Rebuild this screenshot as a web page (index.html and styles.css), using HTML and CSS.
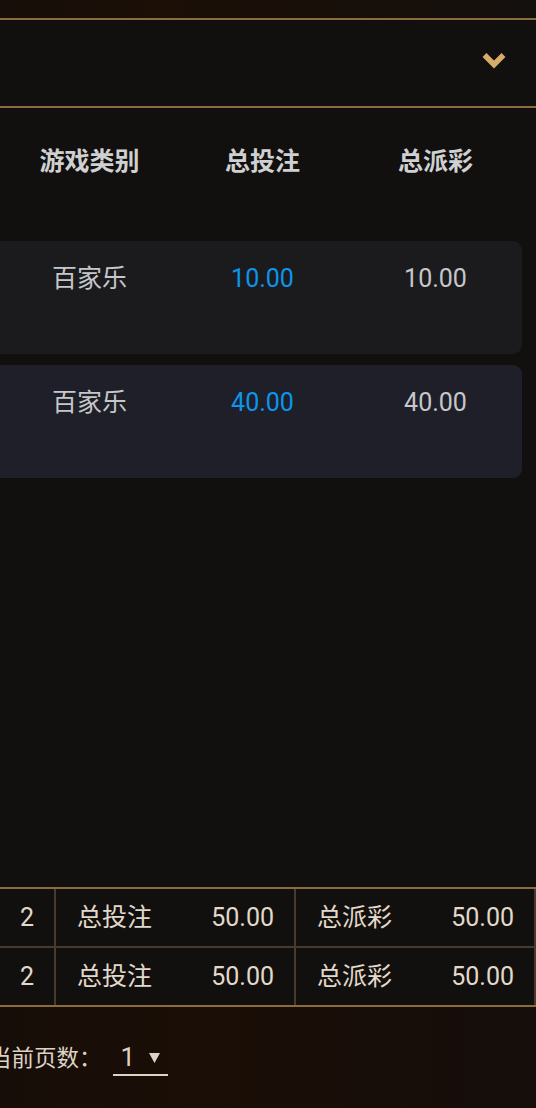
FILE: index.html
```html
<!DOCTYPE html>
<html lang="zh-CN">
<head>
<meta charset="utf-8">
<title>游戏报表</title>
<link rel="stylesheet" href="styles.css">
</head>
<body>
<div class="page">
  <div class="topbar"></div>
  <div class="filter">
    <svg class="chev" width="24" height="17" viewBox="0 0 24 17"><polyline points="2.5,3 12,12.5 21.5,3" fill="none" stroke="#d6ab6c" stroke-width="5.5"/></svg>
  </div>
  <div class="content">
    <div class="thead">
      <div class="col">游戏类别</div>
      <div class="col">总投注</div>
      <div class="col">总派彩</div>
    </div>
    <div class="list">
      <div class="card card-a">
        <div class="col">百家乐</div>
        <div class="col blue">10.00</div>
        <div class="col">10.00</div>
      </div>
      <div class="card card-b">
        <div class="col">百家乐</div>
        <div class="col blue">40.00</div>
        <div class="col">40.00</div>
      </div>
    </div>
  </div>
  <div class="summary">
    <div class="srow">
      <div class="cell num">2</div>
      <div class="cell pair"><span>总投注</span><span>50.00</span></div>
      <div class="cell pair last"><span>总派彩</span><span>50.00</span></div>
    </div>
    <div class="srow">
      <div class="cell num">2</div>
      <div class="cell pair"><span>总投注</span><span>50.00</span></div>
      <div class="cell pair last"><span>总派彩</span><span>50.00</span></div>
    </div>
  </div>
  <div class="pager">
    <span class="plabel">当前页数：</span>
    <div class="select"><span class="pval">1</span><svg class="tri" width="11" height="11" viewBox="0 0 11 11"><polygon points="0,1 11,1 5.5,11" fill="#ddd3c4"/></svg></div>
  </div>
</div>
</body>
</html>
```

FILE: styles.css
```css
html, body {
  margin: 0;
  padding: 0;
  background: #12100e;
}
body {
  width: 536px;
  height: 1108px;
  overflow: hidden;
  font-family: Roboto, "Noto Sans CJK SC", sans-serif;
}
.page {
  width: 536px;
  display: flex;
  flex-direction: column;
}
.topbar {
  height: 18px;
  background: linear-gradient(90deg, #170e09 0%, #1b0f06 30%, #180f09 60%, #14100d 100%);
}
.filter {
  height: 86px;
  border-top: 2px solid #8a6c3f;
  border-bottom: 2px solid #8a6c3f;
  background: #12100e;
  display: flex;
  justify-content: flex-end;
  align-items: flex-start;
  padding-right: 30px;
}
.chev {
  margin-top: 32px;
  display: block;
}
.content {
  height: 779px;
  display: flex;
  flex-direction: column;
}
.thead {
  height: 102px;
  padding-bottom: 4px;
  display: flex;
  justify-content: flex-end;
  align-items: center;
  padding-right: 14px;
  font-size: 25px;
  font-weight: 700;
  color: #cfd0d2;
}
.col {
  width: 173px;
  flex: none;
  text-align: center;
}
.list {
  padding-top: 27px;
  display: flex;
  flex-direction: column;
  gap: 11px;
}
.card {
  height: 113px;
  box-sizing: border-box;
  margin-left: -20px;
  margin-right: 14px;
  border-radius: 9px;
  display: flex;
  justify-content: flex-end;
  align-items: flex-start;
  padding-top: 23px;
  font-size: 25px;
  line-height: 30px;
  color: #c6c7ca;
}
.card-a { background: #1b1b1e; }
.card-b { background: #1e1f28; }
.blue { color: #0b96ec; }

.summary {
  margin-left: -2px;
  width: 538px;
  border-top: 2px solid #8a6c3f;
  border-bottom: 2px solid #8a6c3f;
  background: #12100e;
  color: #e2d9cb;
  font-size: 25px;
  line-height: 30px;
}
.srow {
  display: flex;
  height: 57px;
}
.srow + .srow {
  border-top: 2px solid #473b2b;
}
.cell {
  box-sizing: border-box;
  border-left: 2px solid #473b2b;
  display: flex;
  align-items: center;
  flex: none;
}
.num {
  width: 56px;
  justify-content: center;
}
.pair {
  width: 240px;
  justify-content: space-between;
  padding: 0 20px 0 21px;
}
.cell.last {
  width: 242px;
  border-right: 2px solid #473b2b;
}

.pager {
  height: 97px;
  padding-bottom: 4px;
  flex: none;
  background: linear-gradient(90deg, #170d08 0%, #1a0e06 40%, #170d09 75%, #150e0b 100%);
  display: flex;
  align-items: center;
  margin-left: -11px;
  color: #dcd3c5;
}
.plabel {
  font-size: 22.5px;
}
.select {
  margin-left: 11px;
  width: 55px;
  height: 36px;
  box-sizing: border-box;
  border-bottom: 2px solid #ddd3c4;
  display: flex;
  align-items: center;
  padding-left: 8px;
  margin-top: 4px;
}
.pval {
  font-size: 26px;
  line-height: 30px;
}
.tri {
  margin-left: 14px;
  margin-top: 2px;
  display: block;
}
```
